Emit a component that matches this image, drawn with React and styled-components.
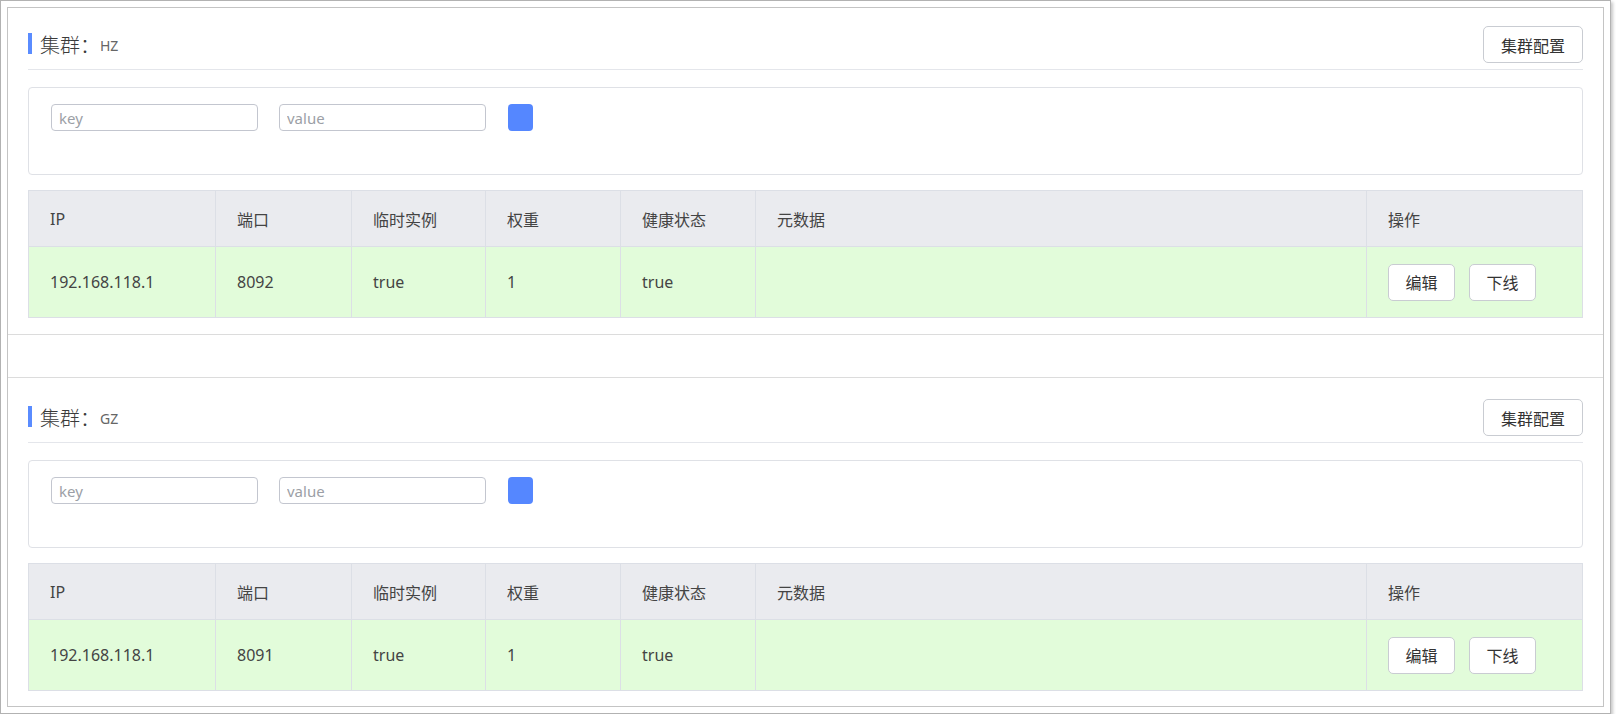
import React from 'react'
import styled, { createGlobalStyle } from 'styled-components'

const clusters = [
  { name: 'HZ', ip: '192.168.118.1', port: '8092', ephemeral: 'true', weight: '1', healthy: 'true', meta: '' },
  { name: 'GZ', ip: '192.168.118.1', port: '8091', ephemeral: 'true', weight: '1', healthy: 'true', meta: '' },
]

const columns = ['IP', '端口', '临时实例', '权重', '健康状态', '元数据', '操作']

const GlobalStyle = createGlobalStyle`
  * { box-sizing: border-box; }
  body {
    margin: 0;
    background: #fff;
    font-family: "Noto Sans", "Noto Sans CJK SC", sans-serif;
    color: #333;
  }
`

const Frame = styled.div`
  width: 1611px;
  height: 714px;
  border: 1px solid #b2b2b2;
  padding: 6px;
  background: #fff;
  box-shadow: 2px 2px 3px rgba(0, 0, 0, 0.22);
`

const Window = styled.div`
  height: 100%;
  border: 1px solid #c4c4c4;
  overflow: hidden;
`

const Cluster = styled.section`
  padding: 18px 20px 16px;
  border-bottom: 1px solid #dcdcdc;
  & + & {
    margin-top: 42px;
    border-top: 1px solid #dcdcdc;
    padding-top: 21px;
  }
`

const Header = styled.div`
  display: flex;
  justify-content: space-between;
  align-items: center;
  padding-bottom: 6px;
  border-bottom: 1px solid #e4e6eb;
`

const Title = styled.div`
  display: flex;
  align-items: center;
  font-size: 20px;
  font-weight: 300;
  line-height: 26px;
  color: #3a3a3a;
  font-family: "Noto Sans CJK SC", sans-serif;
`

const Bar = styled.span`
  width: 4px;
  height: 21px;
  background: #5a8cff;
  margin-right: 8px;
  margin-top: -2px;
`

const Name = styled.span`
  font-size: 14px;
  font-weight: 400;
  color: #666;
  font-family: "Noto Sans", sans-serif;
  margin-top: 2px;
`

const Button = styled.button`
  height: 37px;
  width: ${p => (p.$wide ? 100 : 67)}px;
  padding: 0;
  border: 1px solid #c9ccd2;
  border-radius: 5px;
  background: #fff;
  color: #333;
  font-size: 16px;
  font-family: "Noto Sans CJK SC", sans-serif;
  cursor: pointer;
`

const FilterBox = styled.div`
  margin-top: 17px;
  height: 88px;
  border: 1px solid #dfe1e6;
  border-radius: 4px;
  padding: 16px 22px;
  display: flex;
  align-items: flex-start;
  gap: 21px;
`

const Input = styled.input`
  width: 207px;
  height: 27px;
  border: 1px solid #c3c6cf;
  border-radius: 4px;
  padding: 0 7px;
  font-size: 15px;
  font-family: "Noto Sans", sans-serif;
  color: #333;
  outline: none;
  &::placeholder {
    color: #9c9fa6;
  }
`

const AddButton = styled.button`
  width: 25px;
  height: 27px;
  border: none;
  border-radius: 4px;
  background: #5587ff;
  margin-left: 1px;
`

const Table = styled.div`
  margin-top: 15px;
  border: 1px solid #dcdfe6;
  display: grid;
  grid-template-columns: 186px 136px 134px 135px 135px 1fr 216px;
`

const Cell = styled.div`
  height: ${p => (p.$head ? 56 : 70)}px;
  display: flex;
  align-items: center;
  gap: 14px;
  padding: 0 21px;
  font-size: 16px;
  color: #444;
  background: ${p => (p.$head ? '#eaebef' : '#e2fcda')};
  border-left: 1px solid #dcdfe6;
  border-bottom: ${p => (p.$head ? '1px solid #dcdfe6' : 'none')};
  &:nth-child(7n + 1) {
    border-left: none;
  }
`

const ClusterCard = ({ cluster }) => {
  const values = [cluster.ip, cluster.port, cluster.ephemeral, cluster.weight, cluster.healthy, cluster.meta]
  return (
    <Cluster>
      <Header>
        <Title>
          <Bar />
          集群：<Name>{cluster.name}</Name>
        </Title>
        <Button $wide>集群配置</Button>
      </Header>
      <FilterBox>
        <Input placeholder="key" />
        <Input placeholder="value" />
        <AddButton />
      </FilterBox>
      <Table>
        {columns.map(c => (
          <Cell $head key={c}>{c}</Cell>
        ))}
        {values.map((v, i) => (
          <Cell key={i}>{v}</Cell>
        ))}
        <Cell>
          <Button>编辑</Button>
          <Button>下线</Button>
        </Cell>
      </Table>
    </Cluster>
  )
}

export default function App() {
  return (
    <>
      <GlobalStyle />
      <Frame>
        <Window>
          {clusters.map(c => (
            <ClusterCard key={c.name} cluster={c} />
          ))}
        </Window>
      </Frame>
    </>
  )
}
